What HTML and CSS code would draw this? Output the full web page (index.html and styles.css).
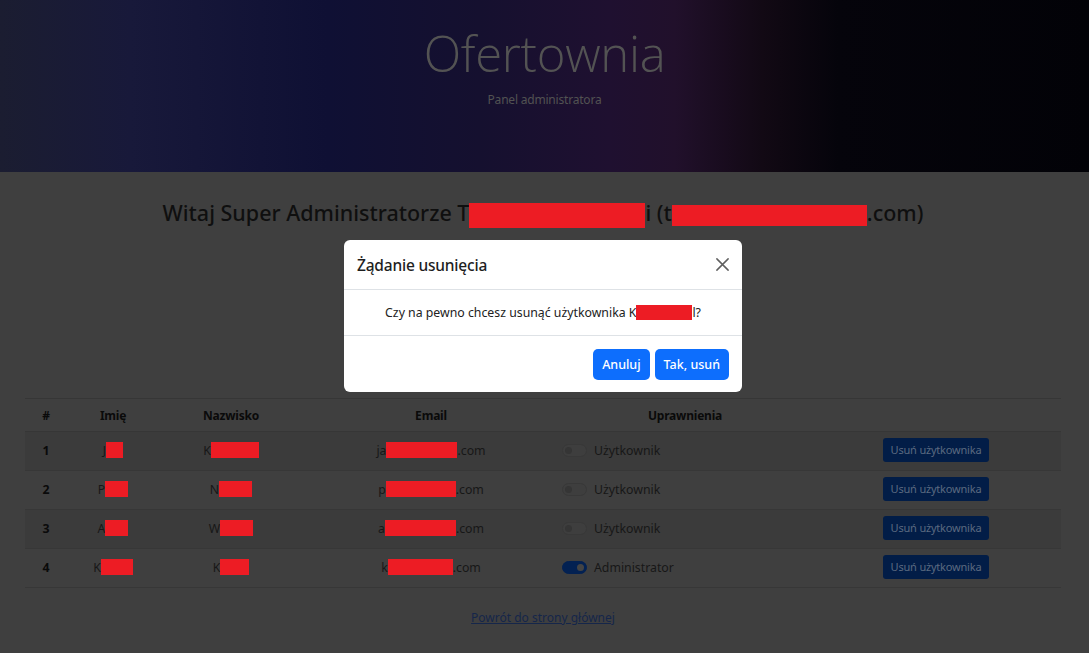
FILE: index.html
```html
<!DOCTYPE html>
<html lang="pl">
<head>
<meta charset="utf-8">
<title>Ofertownia - Panel administratora</title>
<link rel="stylesheet" href="styles.css">
</head>
<body>
<header class="hero">
  <h1 class="hero-title">Ofertownia</h1>
  <p class="hero-sub">Panel administratora</p>
</header>
<main class="content">
  <h2 class="welcome">Witaj Super Administratorze T<span class="red rw176"></span>i (t<span class="red rw195 rh21"></span>.com)</h2>
  <table class="users">
    <colgroup>
      <col class="c0"><col class="c1"><col class="c2"><col class="c3"><col class="c4"><col class="c5">
    </colgroup>
    <thead>
      <tr><th>#</th><th>Imię</th><th>Nazwisko</th><th>Email</th><th>Uprawnienia</th><th></th></tr>
    </thead>
    <tbody>
      <tr class="odd">
        <td class="num">1</td>
        <td>J<span class="red w17"></span></td>
        <td>K<span class="red w48"></span></td>
        <td>ja<span class="red w71"></span>.com</td>
        <td class="perm"><span class="switch"></span><span>Użytkownik</span></td>
        <td><span class="btn-del">Usuń użytkownika</span></td>
      </tr>
      <tr>
        <td class="num">2</td>
        <td>P<span class="red w23"></span></td>
        <td>N<span class="red w33"></span></td>
        <td>p<span class="red w70"></span>.com</td>
        <td class="perm"><span class="switch"></span><span>Użytkownik</span></td>
        <td><span class="btn-del">Usuń użytkownika</span></td>
      </tr>
      <tr class="odd">
        <td class="num">3</td>
        <td>A<span class="red w23"></span></td>
        <td>W<span class="red w33"></span></td>
        <td>a<span class="red w71"></span>.com</td>
        <td class="perm"><span class="switch"></span><span>Użytkownik</span></td>
        <td><span class="btn-del">Usuń użytkownika</span></td>
      </tr>
      <tr>
        <td class="num">4</td>
        <td>K<span class="red w32"></span></td>
        <td>K<span class="red w29"></span></td>
        <td>k<span class="red w65"></span>.com</td>
        <td class="perm"><span class="switch on"></span><span>Administrator</span></td>
        <td><span class="btn-del">Usuń użytkownika</span></td>
      </tr>
    </tbody>
  </table>
  <p class="back-wrap"><a class="back" href="#">Powrót do strony głównej</a></p>
</main>

<div class="modal">
  <div class="modal-header">
    <h5 class="modal-title">Żądanie usunięcia</h5>
    <span class="close" aria-label="Zamknij">
      <svg width="15" height="15" viewBox="0 0 16 16"><path d="M2 2 L14 14 M14 2 L2 14" stroke="#5f5f5f" stroke-width="1.6" fill="none" stroke-linecap="round"/></svg>
    </span>
  </div>
  <div class="modal-body">Czy na pewno chcesz usunąć użytkownika K<span class="red w56 rh15"></span>l?</div>
  <div class="modal-footer">
    <span class="btn-primary">Anuluj</span>
    <span class="btn-primary">Tak, usuń</span>
  </div>
</div>
</body>
</html>
```
FILE: styles.css
```css
* { box-sizing: border-box; }
html, body { margin: 0; padding: 0; }
body {
  background: #3f3f3f;
  font-family: "Noto Sans", "Open Sans", "DejaVu Sans", sans-serif;
  color: #161616;
  width: 1089px;
  height: 653px;
  overflow: hidden;
  position: relative;
}

.hero {
  height: 172px;
  background: linear-gradient(90deg, #1b1d31 0%, #18193a 12%, #0f1034 30%, #15102f 44%, #1f1030 56%, #21102b 62%, #120914 70%, #05040b 77%, #020207 100%);
  text-align: center;
  padding-top: 24px;
}
.hero-title {
  margin: 0;
  font-family: "Open Sans", "Noto Sans", sans-serif;
  font-weight: 300;
  font-size: 49px;
  line-height: 58px;
  color: #535353;
  letter-spacing: -0.3px;
}
.hero-sub {
  margin: 10px 0 0;
  font-size: 12px;
  line-height: 16px;
  color: #525252;
  letter-spacing: -0.2px;
}

.content { padding: 0 28px 0 25px; }

.welcome {
  margin: 26px 0 0;
  text-align: center;
  font-size: 21.5px;
  line-height: 30px;
  font-weight: 500;
  color: #0f0f0f;
}

.red {
  display: inline-block;
  background: #ed1c24;
  height: 16px;
  vertical-align: -3px;
}
.rw176 { width: 176px; height: 25px; vertical-align: -7px; }
.rw195 { width: 195px; }
.rh21 { height: 21px; vertical-align: -5px; }
.rh15 { height: 15px; vertical-align: -3px; }
.w17 { width: 17px; }
.w23 { width: 23px; }
.w29 { width: 29px; }
.w32 { width: 32px; }
.w33 { width: 33px; }
.w48 { width: 48px; }
.w56 { width: 56px; }
.w65 { width: 65px; }
.w70 { width: 70px; }
.w71 { width: 71px; }

.users {
  margin-top: 170px;
  width: 1036px;
  border-collapse: collapse;
  table-layout: fixed;
  font-size: 12.3px;
}
.c0 { width: 42px; }
.c1 { width: 92px; }
.c2 { width: 144px; }
.c3 { width: 256px; }
.c4 { width: 252px; }
.c5 { width: 250px; }

.users th {
  height: 33px;
  font-size: 12px;
  font-weight: 700;
  color: #0a0a0a;
  text-align: center;
  border-top: 1px solid #363636;
  border-bottom: 1px solid #363636;
  padding: 0;
  letter-spacing: -0.2px;
}
.users td {
  height: 39px;
  text-align: center;
  padding: 0 0 2px;
  color: #171717;
  border-bottom: 1px solid #373737;
}
.users tr.odd td { background: #3b3b3b; }
.users td.num { font-weight: 700; color: #0a0a0a; }
.users td.perm { text-align: left; padding-left: 3px; }
.perm > span { vertical-align: middle; }

.switch {
  display: inline-block;
  width: 25px;
  height: 13px;
  border-radius: 7px;
  border: 1px solid #383838;
  background: #3e3e3e;
  position: relative;
  margin-right: 7px;
}
.switch::after {
  content: "";
  position: absolute;
  left: 2px;
  top: 2px;
  width: 7px;
  height: 7px;
  border-radius: 50%;
  background: #353535;
}
.switch.on { background: #032152; border-color: #032152; }
.switch.on::after { left: auto; right: 2px; background: #444; }

.btn-del {
  display: inline-block;
  background: #021d47;
  color: #5b6a80;
  font-size: 11px;
  line-height: 24px;
  height: 24px;
  padding: 0 8px;
  border-radius: 3px;
  letter-spacing: -0.2px;
}

.back-wrap {
  margin: 20px 0 0;
  text-align: center;
  font-size: 12px;
  line-height: 20px;
}
.back { color: #15264a; text-decoration: underline; }

.modal {
  position: absolute;
  top: 240px;
  left: 344px;
  width: 398px;
  height: 152px;
  background: #fff;
  border-radius: 6px;
  color: #212529;
  display: flex;
  flex-direction: column;
}
.modal-header {
  height: 50px;
  display: flex;
  align-items: center;
  justify-content: space-between;
  padding: 0 12px 0 13px;
  border-bottom: 1px solid #dee2e6;
}
.modal-title {
  margin: 0;
  font-size: 15.5px;
  font-weight: 500;
  color: #1e1e1e;
  letter-spacing: -0.2px;
}
.close { display: flex; width: 15px; height: 15px; }
.modal-body {
  height: 46px;
  display: flex;
  align-items: center;
  justify-content: center;
  font-size: 12.3px;
  border-bottom: 1px solid #dee2e6;
  color: #222;
}
.modal-body .red { margin: 0; }
.modal-footer {
  flex: 1;
  display: flex;
  justify-content: flex-end;
  align-items: center;
  gap: 5px;
  padding: 0 13px 0 0;
}
.btn-primary {
  display: inline-block;
  background: #0d6efd;
  color: #fff;
  font-size: 12.5px;
  font-weight: 500;
  height: 31px;
  line-height: 31px;
  padding: 0 9px;
  border-radius: 5px;
}
```
